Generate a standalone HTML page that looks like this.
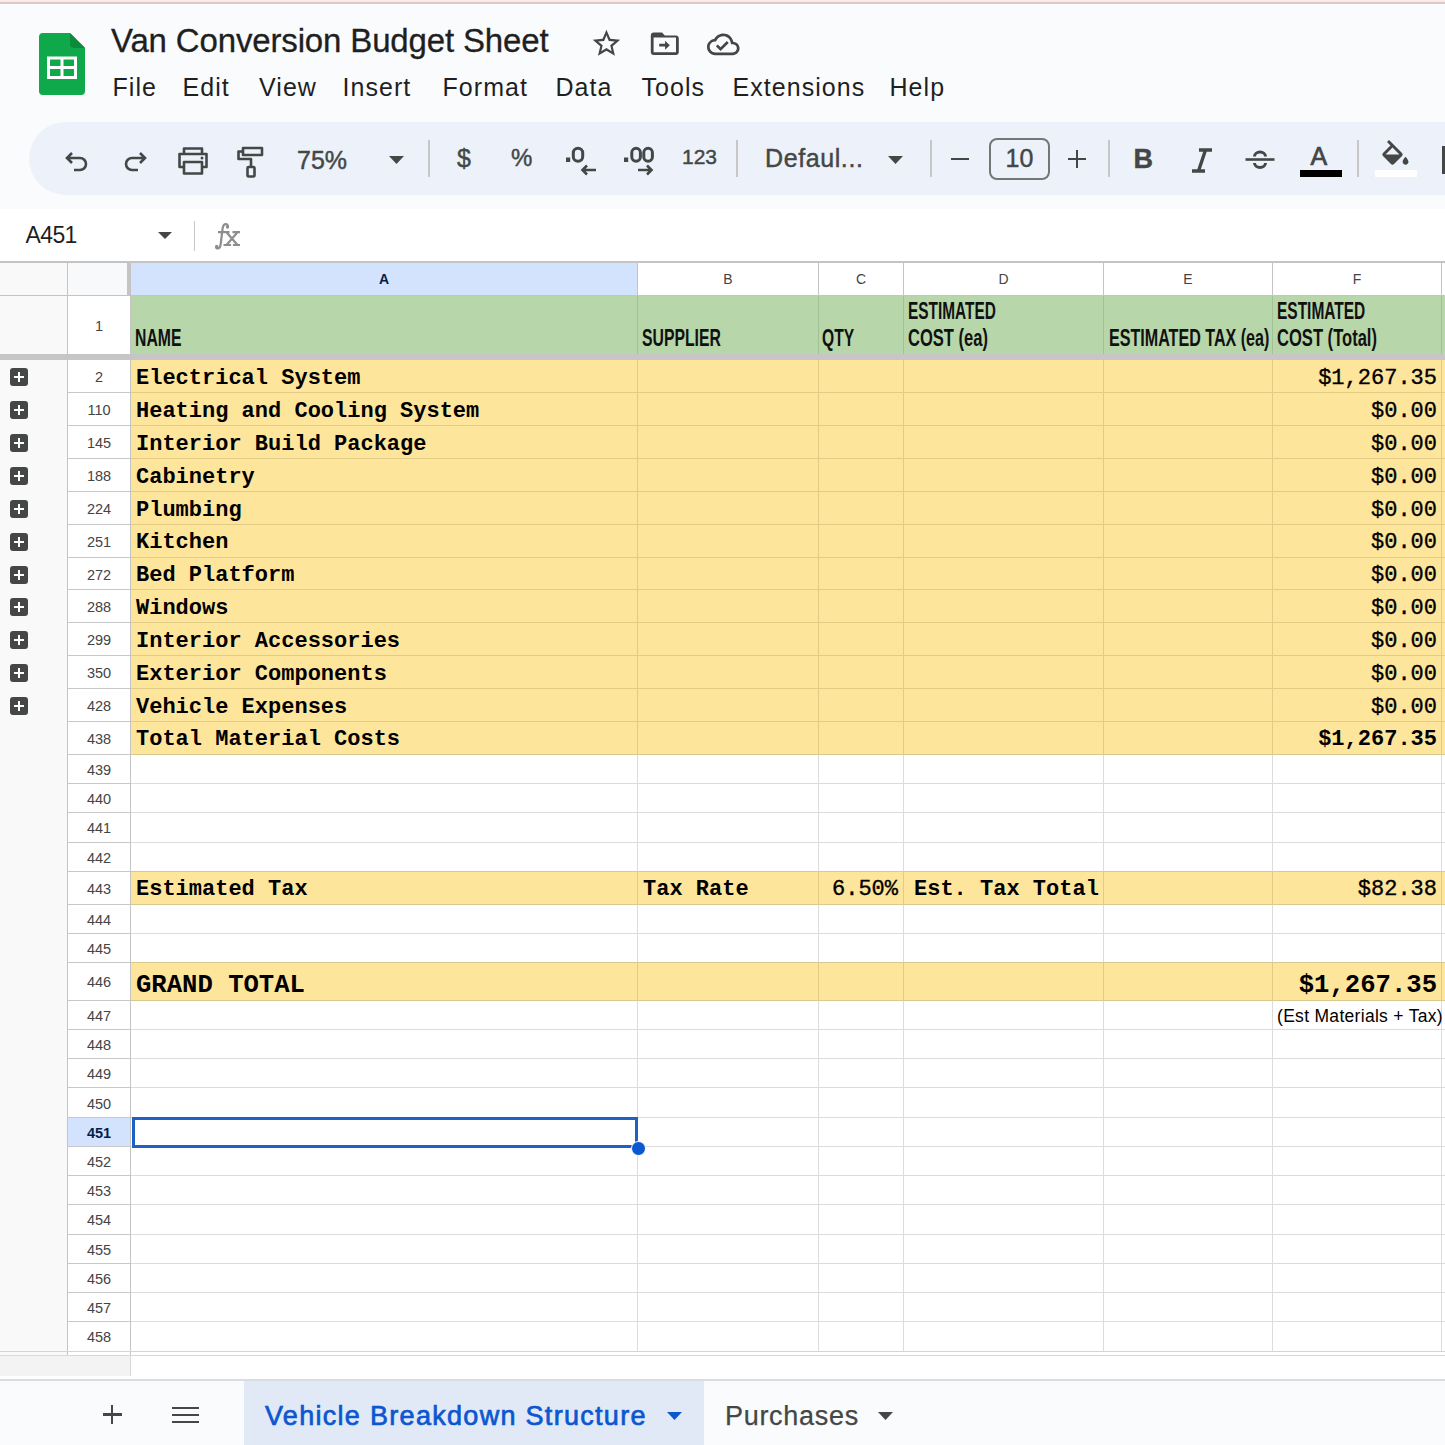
<!DOCTYPE html><html><head><meta charset="utf-8"><style>
*{margin:0;padding:0;box-sizing:border-box}
html,body{width:1445px;height:1445px;overflow:hidden;background:#f9fbfd;font-family:"Liberation Sans",sans-serif;color:#1f1f1f}
.a{position:absolute}
.reg{font-family:"Liberation Mono",monospace;font-size:22px;line-height:22px;color:#000;white-space:pre;-webkit-text-stroke:0.35px #000}
.mono{font-family:"Liberation Mono",monospace;font-weight:bold;color:#000;white-space:pre}
.hdr{font-family:"Liberation Sans",sans-serif;font-weight:bold;color:#111;white-space:nowrap;transform-origin:0 0}
.rn{font-size:14.5px;color:#444;text-align:center;width:62px;left:68px}
.cl{font-size:14px;color:#444;text-align:center}
.menu{font-size:25px;color:#1f1f1f;top:72.5px;letter-spacing:1.05px}
.ic{stroke:#444746;fill:none;stroke-width:2.6}
</style></head><body>
<div class="a" style="left:0;top:0;width:1445px;height:2.5px;background:#fde8e8"></div>
<div class="a" style="left:0;top:2px;width:1445px;height:1.5px;background:#d9caca"></div>
<div class="a" style="left:0;top:3.5px;width:1445px;height:1.5px;background:#fff"></div>
<svg class="a" style="left:39px;top:33px" width="46" height="62" viewBox="0 0 46 62">
<path d="M4 0H31L46 15V58a4 4 0 0 1-4 4H4a4 4 0 0 1-4-4V4a4 4 0 0 1 4-4z" fill="#0fa84a"/>
<path d="M31 0L46 15H35a4 4 0 0 1-4-4z" fill="#0a8a3a"/>
<rect x="8" y="23.5" width="30" height="22.5" fill="#fff"/>
<rect x="11" y="26.5" width="10.5" height="6.5" fill="#0fa84a"/>
<rect x="24.5" y="26.5" width="10.5" height="6.5" fill="#0fa84a"/>
<rect x="11" y="36" width="10.5" height="7" fill="#0fa84a"/>
<rect x="24.5" y="36" width="10.5" height="7" fill="#0fa84a"/>
</svg>
<div class="a" style="left:111px;top:22px;font-size:33px;line-height:38px;color:#1f1f1f;white-space:nowrap;letter-spacing:-0.15px;-webkit-text-stroke:0.3px #1f1f1f">Van Conversion Budget Sheet</div>
<svg class="a" style="left:589.7px;top:27.3px" width="32.9" height="32.9" viewBox="0 0 24 24"><path fill="#444746" d="M22 9.24l-7.19-.62L12 2 9.19 8.63 2 9.24l5.46 4.73L5.82 21 12 17.27 18.18 21l-1.63-7.03L22 9.24zM12 15.4l-3.76 2.27 1-4.28-3.32-2.88 4.38-.38L12 6.1l1.71 4.04 4.38.38-3.320 2.88 1 4.28L12 15.4z"/></svg>
<svg class="a" style="left:647.5px;top:27.4px" width="33.6" height="33.6" viewBox="0 0 24 24"><path fill="#444746" d="M20 6h-8l-2-2H4c-1.1 0-1.99.9-1.99 2L2 18c0 1.1.9 2 2 2h16c1.1 0 2-.9 2-2V8c0-1.1-.9-2-2-2zm0 12H4V7.5h16z"/><path fill="#444746" d="M8 12h4.2v-2.2L15.6 13l-3.4 3.2V14H8z"/></svg>
<svg class="a" style="left:707px;top:27.6px" width="32.6" height="32.6" viewBox="0 0 24 24"><path fill="#444746" d="M19.35 10.04C18.67 6.59 15.64 4 12 4 9.11 4 6.6 5.64 5.35 8.04 2.34 8.36 0 10.91 0 14c0 3.31 2.69 6 6 6h13c2.76 0 5-2.24 5-5 0-2.64-2.05-4.780-4.65-4.96zM19 18H6c-2.21 0-4-1.79-4-4 0-2.05 1.53-3.76 3.56-3.97l1.07-.11.5-.95C8.080 7.14 9.94 6 12 6c2.62 0 4.88 1.86 5.39 4.43l.3 1.5 1.53.11c1.56.1 2.78 1.41 2.78 2.96 0 1.65-1.35 3-3 3zm-9-3.82l-2.09-2.09L6.5 13.5 10 17l6.01-6.01-1.41-1.41z"/></svg>
<div class="a menu" style="left:112.5px">File</div>
<div class="a menu" style="left:182.5px">Edit</div>
<div class="a menu" style="left:259px">View</div>
<div class="a menu" style="left:342.5px">Insert</div>
<div class="a menu" style="left:442.5px">Format</div>
<div class="a menu" style="left:555.5px">Data</div>
<div class="a menu" style="left:641.5px">Tools</div>
<div class="a menu" style="left:732.5px">Extensions</div>
<div class="a menu" style="left:889.5px">Help</div>
<div class="a" style="left:29px;top:122px;width:1500px;height:73px;border-radius:37px;background:#edf2fa"></div>
<svg class="a" style="left:62px;top:146px" width="30" height="30" viewBox="0 0 30 30"><path class="ic" stroke-width="2.7" d="M10 7L5 12l5 5M5 12h13a6 6 0 0 1 0 12h-6"/></svg>
<svg class="a" style="left:120px;top:146px" width="30" height="30" viewBox="0 0 30 30"><path class="ic" stroke-width="2.7" d="M20 7l5 5-5 5M25 12H12a6 6 0 0 0 0 12h6"/></svg>
<svg class="a" style="left:177px;top:146px" width="32" height="30" viewBox="0 0 32 30"><path class="ic" stroke-width="2.7" stroke-linejoin="round" d="M7 7V2.5h18V7M7 21H2.5V8h27v13H25M7 16h18v11.5H7z"/><circle cx="25" cy="12" r="1.5" fill="#444746"/></svg>
<svg class="a" style="left:236px;top:145px" width="30" height="34" viewBox="0 0 30 34"><path class="ic" stroke-width="2.7" stroke-linejoin="round" d="M7 3h19v7H7zM7 6.5H2.5v7.5h12.5v8"/><rect x="11.5" y="22" width="7" height="9.5" rx="1" class="ic" stroke-width="2.7"/></svg>
<div class="a" style="left:297px;top:145px;font-size:25px;line-height:30px;color:#444746;-webkit-text-stroke:0.45px #444746">75%</div>
<svg class="a" style="left:389px;top:155.5px" width="15" height="8" viewBox="0 0 15 8"><path d="M0 0H15L7.5 8z" fill="#444746"/></svg>
<div class="a" style="left:427.5px;top:140px;width:2px;height:37px;background:#c7c7c7"></div>
<div class="a" style="left:457px;top:143px;font-size:25px;line-height:30px;color:#444746;-webkit-text-stroke:0.45px #444746">$</div>
<div class="a" style="left:511px;top:143px;font-size:24px;line-height:30px;color:#444746;-webkit-text-stroke:0.45px #444746">%</div>
<svg class="a" style="left:564px;top:145px" width="22" height="20" viewBox="0 0 22 20"><rect x="2" y="12.5" width="4.2" height="4.5" fill="#444746"/><rect x="9.3" y="3.3" width="9.4" height="13" rx="4.7" fill="none" stroke="#444746" stroke-width="3"/></svg>
<svg class="a" style="left:580px;top:164px" width="17" height="12" viewBox="0 0 17 12"><path class="ic" stroke-width="2.5" d="M16 6H3M7 1.5L2.5 6 7 10.5"/></svg>
<svg class="a" style="left:622px;top:145px" width="34" height="20" viewBox="0 0 34 20"><rect x="2" y="12.5" width="4.2" height="4.5" fill="#444746"/><rect x="9.8" y="3.3" width="8.6" height="13" rx="4.3" fill="none" stroke="#444746" stroke-width="3"/><rect x="21.8" y="3.3" width="8.6" height="13" rx="4.3" fill="none" stroke="#444746" stroke-width="3"/></svg>
<svg class="a" style="left:637px;top:164px" width="17" height="12" viewBox="0 0 17 12"><path class="ic" stroke-width="2.5" d="M1 6h13M10 1.5L14.5 6 10 10.5"/></svg>
<div class="a" style="left:682px;top:144px;font-size:21px;line-height:26px;color:#444746;-webkit-text-stroke:0.45px #444746">123</div>
<div class="a" style="left:736px;top:140px;width:2px;height:37px;background:#c7c7c7"></div>
<div class="a" style="left:765px;top:143px;font-size:25px;line-height:30px;color:#444746;-webkit-text-stroke:0.45px #444746;letter-spacing:0.6px">Defaul...</div>
<svg class="a" style="left:888px;top:155.5px" width="15" height="8" viewBox="0 0 15 8"><path d="M0 0H15L7.5 8z" fill="#444746"/></svg>
<div class="a" style="left:930px;top:140px;width:2px;height:37px;background:#c7c7c7"></div>
<div class="a" style="left:951px;top:157.5px;width:18px;height:2.6px;background:#444746"></div>
<div class="a" style="left:989px;top:138px;width:61px;height:42px;border:2px solid #747775;border-radius:8px"></div>
<div class="a" style="left:989px;top:143px;width:61px;text-align:center;font-size:25px;line-height:30px;color:#444746;-webkit-text-stroke:0.45px #444746">10</div>
<div class="a" style="left:1068px;top:157.5px;width:18px;height:2.6px;background:#444746"></div>
<div class="a" style="left:1075.7px;top:150px;width:2.6px;height:18px;background:#444746"></div>
<div class="a" style="left:1107.5px;top:140px;width:2px;height:37px;background:#c7c7c7"></div>
<div class="a" style="left:1133.5px;top:143.5px;font-size:27px;line-height:30px;font-weight:bold;color:#444746;-webkit-text-stroke:0.4px #444746">B</div>
<svg class="a" style="left:1190px;top:148px" width="24" height="26" viewBox="0 0 24 26"><path d="M9 2h13M2 23h13M15.5 2L8.5 23" stroke="#444746" stroke-width="3.4" fill="none"/></svg>
<svg class="a" style="left:1244px;top:148px" width="32" height="24" viewBox="0 0 32 24"><path d="M1.5 11.5h29" stroke="#444746" stroke-width="2.6"/><path d="M10.5 8.5a5.5 4.5 0 0 1 11 0M10.5 15a5.5 4.5 0 0 0 11 0" stroke="#444746" stroke-width="3" fill="none"/></svg>
<div class="a" style="left:1310.5px;top:140.5px;font-size:25px;line-height:30px;color:#444746;-webkit-text-stroke:0.7px #444746">A</div>
<div class="a" style="left:1300px;top:169.5px;width:42px;height:7.5px;background:#000"></div>
<div class="a" style="left:1357px;top:140px;width:2px;height:37px;background:#c7c7c7"></div>
<svg class="a" style="left:1377.7px;top:140.3px" width="34.8" height="34.8" viewBox="0 0 24 24"><path fill="#444746" d="M16.56 8.94L7.62 0 6.21 1.41l2.38 2.38-5.15 5.15c-.59.59-.59 1.54 0 2.12l5.5 5.5c.29.29.68.44 1.06.44s.77-.15 1.06-.44l5.5-5.5c.59-.58.59-1.53 0-2.12zM5.21 10L10 5.21 14.79 10H5.21zM19 11.5s-2 2.17-2 3.5c0 1.1.9 2 2 2s2-.9 2-2c0-1.33-2-3.5-2-3.5z"/></svg>
<div class="a" style="left:1375px;top:170px;width:42px;height:7px;background:#fff"></div>
<div class="a" style="left:1442px;top:146px;width:4px;height:28px;background:#444746"></div>
<div class="a" style="left:0;top:208.5px;width:1445px;height:53.5px;background:#fff"></div>
<div class="a" style="left:25.5px;top:221px;font-size:23px;line-height:28px;color:#1f1f1f;letter-spacing:-0.6px">A451</div>
<svg class="a" style="left:157.5px;top:232px" width="14" height="7" viewBox="0 0 14 7"><path d="M0 0H14L7.0 7z" fill="#444746"/></svg>
<div class="a" style="left:193.5px;top:221px;width:1.5px;height:30px;background:#c7c7c7"></div>
<svg class="a" style="left:214px;top:222px" width="28" height="28" viewBox="0 0 28 28"><g stroke="#8e8e8e" fill="none" stroke-width="2.2"><path d="M14 5.2C14 3.2 13.2 2.1 11.8 2.1 9.8 2.1 9 4 8.6 6.5L6.7 22C6.3 25 5.3 26.4 3.8 26.4 2.6 26.4 2 25.6 2 24.7"/><path d="M4 10.2H15.5M18.5 10.2H26M12.5 10.2L23.5 23M23.5 10.2L12.5 23M9.5 23H17M19 23H26"/></g><circle cx="13.5" cy="5" r="1.7" fill="#8e8e8e"/><circle cx="2.7" cy="24.5" r="1.7" fill="#8e8e8e"/></svg>
<div class="a" style="left:0px;top:262px;width:1445px;height:1118px;background:#fff"></div>
<div class="a" style="left:0px;top:262px;width:67px;height:1093px;background:#faf9f9"></div>
<div class="a" style="left:68px;top:263px;width:59px;height:32px;background:#f8f9fa"></div>
<div class="a" style="left:131px;top:263px;width:506px;height:32px;background:#d3e3fd"></div>
<div class="a cl" style="left:131px;top:271px;width:506px;line-height:16px;color:#041e49;font-weight:bold">A</div>
<div class="a" style="left:638px;top:263px;width:180px;height:32px;background:#fff"></div>
<div class="a cl" style="left:638px;top:271px;width:180px;line-height:16px;color:#444;font-weight:normal">B</div>
<div class="a" style="left:819px;top:263px;width:84px;height:32px;background:#fff"></div>
<div class="a cl" style="left:819px;top:271px;width:84px;line-height:16px;color:#444;font-weight:normal">C</div>
<div class="a" style="left:904px;top:263px;width:199px;height:32px;background:#fff"></div>
<div class="a cl" style="left:904px;top:271px;width:199px;line-height:16px;color:#444;font-weight:normal">D</div>
<div class="a" style="left:1104px;top:263px;width:168px;height:32px;background:#fff"></div>
<div class="a cl" style="left:1104px;top:271px;width:168px;line-height:16px;color:#444;font-weight:normal">E</div>
<div class="a" style="left:1273px;top:263px;width:168px;height:32px;background:#fff"></div>
<div class="a cl" style="left:1273px;top:271px;width:168px;line-height:16px;color:#444;font-weight:normal">F</div>
<div class="a" style="left:1442px;top:263px;width:3px;height:32px;background:#fff"></div>
<div class="a" style="left:68px;top:296px;width:62px;height:58px;background:#fff"></div>
<div class="a" style="left:131px;top:296px;width:1314px;height:58px;background:#b7d6a9"></div>
<div class="a rn" style="top:316.5px;line-height:18px;color:#444;font-weight:normal">1</div>
<div class="a" style="left:637px;top:296px;width:1px;height:58px;background:#a3c197"></div>
<div class="a" style="left:818px;top:296px;width:1px;height:58px;background:#a3c197"></div>
<div class="a" style="left:903px;top:296px;width:1px;height:58px;background:#a3c197"></div>
<div class="a" style="left:1103px;top:296px;width:1px;height:58px;background:#a3c197"></div>
<div class="a" style="left:1272px;top:296px;width:1px;height:58px;background:#a3c197"></div>
<div class="a" style="left:1441px;top:296px;width:1px;height:58px;background:#a3c197"></div>
<div class="a" style="left:68px;top:360px;width:62px;height:32px;background:#fff"></div>
<div class="a" style="left:131px;top:360px;width:1314px;height:32px;background:#fee59c"></div>
<div class="a rn" style="top:368.43px;line-height:18px;color:#444;font-weight:normal">2</div>
<div class="a" style="left:637px;top:360px;width:1px;height:32px;background:#e2cb84"></div>
<div class="a" style="left:818px;top:360px;width:1px;height:32px;background:#e2cb84"></div>
<div class="a" style="left:903px;top:360px;width:1px;height:32px;background:#e2cb84"></div>
<div class="a" style="left:1103px;top:360px;width:1px;height:32px;background:#e2cb84"></div>
<div class="a" style="left:1272px;top:360px;width:1px;height:32px;background:#e2cb84"></div>
<div class="a" style="left:1441px;top:360px;width:1px;height:32px;background:#e2cb84"></div>
<div class="a" style="left:131px;top:392px;width:1314px;height:1px;background:#e2cb84"></div>
<div class="a" style="left:68px;top:392px;width:63px;height:1px;background:#c8c8c8"></div>
<div class="a" style="left:68px;top:393px;width:62px;height:32px;background:#fff"></div>
<div class="a" style="left:131px;top:393px;width:1314px;height:32px;background:#fee59c"></div>
<div class="a rn" style="top:401.28px;line-height:18px;color:#444;font-weight:normal">110</div>
<div class="a" style="left:637px;top:393px;width:1px;height:32px;background:#e2cb84"></div>
<div class="a" style="left:818px;top:393px;width:1px;height:32px;background:#e2cb84"></div>
<div class="a" style="left:903px;top:393px;width:1px;height:32px;background:#e2cb84"></div>
<div class="a" style="left:1103px;top:393px;width:1px;height:32px;background:#e2cb84"></div>
<div class="a" style="left:1272px;top:393px;width:1px;height:32px;background:#e2cb84"></div>
<div class="a" style="left:1441px;top:393px;width:1px;height:32px;background:#e2cb84"></div>
<div class="a" style="left:131px;top:425px;width:1314px;height:1px;background:#e2cb84"></div>
<div class="a" style="left:68px;top:425px;width:63px;height:1px;background:#c8c8c8"></div>
<div class="a" style="left:68px;top:426px;width:62px;height:32px;background:#fff"></div>
<div class="a" style="left:131px;top:426px;width:1314px;height:32px;background:#fee59c"></div>
<div class="a rn" style="top:434.13px;line-height:18px;color:#444;font-weight:normal">145</div>
<div class="a" style="left:637px;top:426px;width:1px;height:32px;background:#e2cb84"></div>
<div class="a" style="left:818px;top:426px;width:1px;height:32px;background:#e2cb84"></div>
<div class="a" style="left:903px;top:426px;width:1px;height:32px;background:#e2cb84"></div>
<div class="a" style="left:1103px;top:426px;width:1px;height:32px;background:#e2cb84"></div>
<div class="a" style="left:1272px;top:426px;width:1px;height:32px;background:#e2cb84"></div>
<div class="a" style="left:1441px;top:426px;width:1px;height:32px;background:#e2cb84"></div>
<div class="a" style="left:131px;top:458px;width:1314px;height:1px;background:#e2cb84"></div>
<div class="a" style="left:68px;top:458px;width:63px;height:1px;background:#c8c8c8"></div>
<div class="a" style="left:68px;top:459px;width:62px;height:32px;background:#fff"></div>
<div class="a" style="left:131px;top:459px;width:1314px;height:32px;background:#fee59c"></div>
<div class="a rn" style="top:466.98px;line-height:18px;color:#444;font-weight:normal">188</div>
<div class="a" style="left:637px;top:459px;width:1px;height:32px;background:#e2cb84"></div>
<div class="a" style="left:818px;top:459px;width:1px;height:32px;background:#e2cb84"></div>
<div class="a" style="left:903px;top:459px;width:1px;height:32px;background:#e2cb84"></div>
<div class="a" style="left:1103px;top:459px;width:1px;height:32px;background:#e2cb84"></div>
<div class="a" style="left:1272px;top:459px;width:1px;height:32px;background:#e2cb84"></div>
<div class="a" style="left:1441px;top:459px;width:1px;height:32px;background:#e2cb84"></div>
<div class="a" style="left:131px;top:491px;width:1314px;height:1px;background:#e2cb84"></div>
<div class="a" style="left:68px;top:491px;width:63px;height:1px;background:#c8c8c8"></div>
<div class="a" style="left:68px;top:492px;width:62px;height:32px;background:#fff"></div>
<div class="a" style="left:131px;top:492px;width:1314px;height:32px;background:#fee59c"></div>
<div class="a rn" style="top:499.83px;line-height:18px;color:#444;font-weight:normal">224</div>
<div class="a" style="left:637px;top:492px;width:1px;height:32px;background:#e2cb84"></div>
<div class="a" style="left:818px;top:492px;width:1px;height:32px;background:#e2cb84"></div>
<div class="a" style="left:903px;top:492px;width:1px;height:32px;background:#e2cb84"></div>
<div class="a" style="left:1103px;top:492px;width:1px;height:32px;background:#e2cb84"></div>
<div class="a" style="left:1272px;top:492px;width:1px;height:32px;background:#e2cb84"></div>
<div class="a" style="left:1441px;top:492px;width:1px;height:32px;background:#e2cb84"></div>
<div class="a" style="left:131px;top:524px;width:1314px;height:1px;background:#e2cb84"></div>
<div class="a" style="left:68px;top:524px;width:63px;height:1px;background:#c8c8c8"></div>
<div class="a" style="left:68px;top:525px;width:62px;height:32px;background:#fff"></div>
<div class="a" style="left:131px;top:525px;width:1314px;height:32px;background:#fee59c"></div>
<div class="a rn" style="top:532.68px;line-height:18px;color:#444;font-weight:normal">251</div>
<div class="a" style="left:637px;top:525px;width:1px;height:32px;background:#e2cb84"></div>
<div class="a" style="left:818px;top:525px;width:1px;height:32px;background:#e2cb84"></div>
<div class="a" style="left:903px;top:525px;width:1px;height:32px;background:#e2cb84"></div>
<div class="a" style="left:1103px;top:525px;width:1px;height:32px;background:#e2cb84"></div>
<div class="a" style="left:1272px;top:525px;width:1px;height:32px;background:#e2cb84"></div>
<div class="a" style="left:1441px;top:525px;width:1px;height:32px;background:#e2cb84"></div>
<div class="a" style="left:131px;top:557px;width:1314px;height:1px;background:#e2cb84"></div>
<div class="a" style="left:68px;top:557px;width:63px;height:1px;background:#c8c8c8"></div>
<div class="a" style="left:68px;top:558px;width:62px;height:31px;background:#fff"></div>
<div class="a" style="left:131px;top:558px;width:1314px;height:31px;background:#fee59c"></div>
<div class="a rn" style="top:565.53px;line-height:18px;color:#444;font-weight:normal">272</div>
<div class="a" style="left:637px;top:558px;width:1px;height:31px;background:#e2cb84"></div>
<div class="a" style="left:818px;top:558px;width:1px;height:31px;background:#e2cb84"></div>
<div class="a" style="left:903px;top:558px;width:1px;height:31px;background:#e2cb84"></div>
<div class="a" style="left:1103px;top:558px;width:1px;height:31px;background:#e2cb84"></div>
<div class="a" style="left:1272px;top:558px;width:1px;height:31px;background:#e2cb84"></div>
<div class="a" style="left:1441px;top:558px;width:1px;height:31px;background:#e2cb84"></div>
<div class="a" style="left:131px;top:589px;width:1314px;height:1px;background:#e2cb84"></div>
<div class="a" style="left:68px;top:589px;width:63px;height:1px;background:#c8c8c8"></div>
<div class="a" style="left:68px;top:590px;width:62px;height:32px;background:#fff"></div>
<div class="a" style="left:131px;top:590px;width:1314px;height:32px;background:#fee59c"></div>
<div class="a rn" style="top:598.38px;line-height:18px;color:#444;font-weight:normal">288</div>
<div class="a" style="left:637px;top:590px;width:1px;height:32px;background:#e2cb84"></div>
<div class="a" style="left:818px;top:590px;width:1px;height:32px;background:#e2cb84"></div>
<div class="a" style="left:903px;top:590px;width:1px;height:32px;background:#e2cb84"></div>
<div class="a" style="left:1103px;top:590px;width:1px;height:32px;background:#e2cb84"></div>
<div class="a" style="left:1272px;top:590px;width:1px;height:32px;background:#e2cb84"></div>
<div class="a" style="left:1441px;top:590px;width:1px;height:32px;background:#e2cb84"></div>
<div class="a" style="left:131px;top:622px;width:1314px;height:1px;background:#e2cb84"></div>
<div class="a" style="left:68px;top:622px;width:63px;height:1px;background:#c8c8c8"></div>
<div class="a" style="left:68px;top:623px;width:62px;height:32px;background:#fff"></div>
<div class="a" style="left:131px;top:623px;width:1314px;height:32px;background:#fee59c"></div>
<div class="a rn" style="top:631.23px;line-height:18px;color:#444;font-weight:normal">299</div>
<div class="a" style="left:637px;top:623px;width:1px;height:32px;background:#e2cb84"></div>
<div class="a" style="left:818px;top:623px;width:1px;height:32px;background:#e2cb84"></div>
<div class="a" style="left:903px;top:623px;width:1px;height:32px;background:#e2cb84"></div>
<div class="a" style="left:1103px;top:623px;width:1px;height:32px;background:#e2cb84"></div>
<div class="a" style="left:1272px;top:623px;width:1px;height:32px;background:#e2cb84"></div>
<div class="a" style="left:1441px;top:623px;width:1px;height:32px;background:#e2cb84"></div>
<div class="a" style="left:131px;top:655px;width:1314px;height:1px;background:#e2cb84"></div>
<div class="a" style="left:68px;top:655px;width:63px;height:1px;background:#c8c8c8"></div>
<div class="a" style="left:68px;top:656px;width:62px;height:32px;background:#fff"></div>
<div class="a" style="left:131px;top:656px;width:1314px;height:32px;background:#fee59c"></div>
<div class="a rn" style="top:664.08px;line-height:18px;color:#444;font-weight:normal">350</div>
<div class="a" style="left:637px;top:656px;width:1px;height:32px;background:#e2cb84"></div>
<div class="a" style="left:818px;top:656px;width:1px;height:32px;background:#e2cb84"></div>
<div class="a" style="left:903px;top:656px;width:1px;height:32px;background:#e2cb84"></div>
<div class="a" style="left:1103px;top:656px;width:1px;height:32px;background:#e2cb84"></div>
<div class="a" style="left:1272px;top:656px;width:1px;height:32px;background:#e2cb84"></div>
<div class="a" style="left:1441px;top:656px;width:1px;height:32px;background:#e2cb84"></div>
<div class="a" style="left:131px;top:688px;width:1314px;height:1px;background:#e2cb84"></div>
<div class="a" style="left:68px;top:688px;width:63px;height:1px;background:#c8c8c8"></div>
<div class="a" style="left:68px;top:689px;width:62px;height:32px;background:#fff"></div>
<div class="a" style="left:131px;top:689px;width:1314px;height:32px;background:#fee59c"></div>
<div class="a rn" style="top:696.93px;line-height:18px;color:#444;font-weight:normal">428</div>
<div class="a" style="left:637px;top:689px;width:1px;height:32px;background:#e2cb84"></div>
<div class="a" style="left:818px;top:689px;width:1px;height:32px;background:#e2cb84"></div>
<div class="a" style="left:903px;top:689px;width:1px;height:32px;background:#e2cb84"></div>
<div class="a" style="left:1103px;top:689px;width:1px;height:32px;background:#e2cb84"></div>
<div class="a" style="left:1272px;top:689px;width:1px;height:32px;background:#e2cb84"></div>
<div class="a" style="left:1441px;top:689px;width:1px;height:32px;background:#e2cb84"></div>
<div class="a" style="left:131px;top:721px;width:1314px;height:1px;background:#e2cb84"></div>
<div class="a" style="left:68px;top:721px;width:63px;height:1px;background:#c8c8c8"></div>
<div class="a" style="left:68px;top:722px;width:62px;height:32px;background:#fff"></div>
<div class="a" style="left:131px;top:722px;width:1314px;height:32px;background:#fee59c"></div>
<div class="a rn" style="top:729.78px;line-height:18px;color:#444;font-weight:normal">438</div>
<div class="a" style="left:637px;top:722px;width:1px;height:32px;background:#e2cb84"></div>
<div class="a" style="left:818px;top:722px;width:1px;height:32px;background:#e2cb84"></div>
<div class="a" style="left:903px;top:722px;width:1px;height:32px;background:#e2cb84"></div>
<div class="a" style="left:1103px;top:722px;width:1px;height:32px;background:#e2cb84"></div>
<div class="a" style="left:1272px;top:722px;width:1px;height:32px;background:#e2cb84"></div>
<div class="a" style="left:1441px;top:722px;width:1px;height:32px;background:#e2cb84"></div>
<div class="a" style="left:131px;top:754px;width:1314px;height:1px;background:#d8c991"></div>
<div class="a" style="left:68px;top:754px;width:63px;height:1px;background:#c8c8c8"></div>
<div class="a" style="left:68px;top:755px;width:62px;height:28px;background:#fff"></div>
<div class="a rn" style="top:760.85px;line-height:18px;color:#444;font-weight:normal">439</div>
<div class="a" style="left:637px;top:755px;width:1px;height:28px;background:#dcdcdc"></div>
<div class="a" style="left:818px;top:755px;width:1px;height:28px;background:#dcdcdc"></div>
<div class="a" style="left:903px;top:755px;width:1px;height:28px;background:#dcdcdc"></div>
<div class="a" style="left:1103px;top:755px;width:1px;height:28px;background:#dcdcdc"></div>
<div class="a" style="left:1272px;top:755px;width:1px;height:28px;background:#dcdcdc"></div>
<div class="a" style="left:1441px;top:755px;width:1px;height:28px;background:#dcdcdc"></div>
<div class="a" style="left:131px;top:783px;width:1314px;height:1px;background:#dcdcdc"></div>
<div class="a" style="left:68px;top:783px;width:63px;height:1px;background:#c8c8c8"></div>
<div class="a" style="left:68px;top:784px;width:62px;height:28px;background:#fff"></div>
<div class="a rn" style="top:790.15px;line-height:18px;color:#444;font-weight:normal">440</div>
<div class="a" style="left:637px;top:784px;width:1px;height:28px;background:#dcdcdc"></div>
<div class="a" style="left:818px;top:784px;width:1px;height:28px;background:#dcdcdc"></div>
<div class="a" style="left:903px;top:784px;width:1px;height:28px;background:#dcdcdc"></div>
<div class="a" style="left:1103px;top:784px;width:1px;height:28px;background:#dcdcdc"></div>
<div class="a" style="left:1272px;top:784px;width:1px;height:28px;background:#dcdcdc"></div>
<div class="a" style="left:1441px;top:784px;width:1px;height:28px;background:#dcdcdc"></div>
<div class="a" style="left:131px;top:812px;width:1314px;height:1px;background:#dcdcdc"></div>
<div class="a" style="left:68px;top:812px;width:63px;height:1px;background:#c8c8c8"></div>
<div class="a" style="left:68px;top:813px;width:62px;height:29px;background:#fff"></div>
<div class="a rn" style="top:819.45px;line-height:18px;color:#444;font-weight:normal">441</div>
<div class="a" style="left:637px;top:813px;width:1px;height:29px;background:#dcdcdc"></div>
<div class="a" style="left:818px;top:813px;width:1px;height:29px;background:#dcdcdc"></div>
<div class="a" style="left:903px;top:813px;width:1px;height:29px;background:#dcdcdc"></div>
<div class="a" style="left:1103px;top:813px;width:1px;height:29px;background:#dcdcdc"></div>
<div class="a" style="left:1272px;top:813px;width:1px;height:29px;background:#dcdcdc"></div>
<div class="a" style="left:1441px;top:813px;width:1px;height:29px;background:#dcdcdc"></div>
<div class="a" style="left:131px;top:842px;width:1314px;height:1px;background:#dcdcdc"></div>
<div class="a" style="left:68px;top:842px;width:63px;height:1px;background:#c8c8c8"></div>
<div class="a" style="left:68px;top:843px;width:62px;height:28px;background:#fff"></div>
<div class="a rn" style="top:848.75px;line-height:18px;color:#444;font-weight:normal">442</div>
<div class="a" style="left:637px;top:843px;width:1px;height:28px;background:#dcdcdc"></div>
<div class="a" style="left:818px;top:843px;width:1px;height:28px;background:#dcdcdc"></div>
<div class="a" style="left:903px;top:843px;width:1px;height:28px;background:#dcdcdc"></div>
<div class="a" style="left:1103px;top:843px;width:1px;height:28px;background:#dcdcdc"></div>
<div class="a" style="left:1272px;top:843px;width:1px;height:28px;background:#dcdcdc"></div>
<div class="a" style="left:1441px;top:843px;width:1px;height:28px;background:#dcdcdc"></div>
<div class="a" style="left:131px;top:871px;width:1314px;height:1px;background:#d8c991"></div>
<div class="a" style="left:68px;top:871px;width:63px;height:1px;background:#c8c8c8"></div>
<div class="a" style="left:68px;top:872px;width:62px;height:32px;background:#fff"></div>
<div class="a" style="left:131px;top:872px;width:1314px;height:32px;background:#fee59c"></div>
<div class="a rn" style="top:879.7px;line-height:18px;color:#444;font-weight:normal">443</div>
<div class="a" style="left:637px;top:872px;width:1px;height:32px;background:#e2cb84"></div>
<div class="a" style="left:818px;top:872px;width:1px;height:32px;background:#e2cb84"></div>
<div class="a" style="left:903px;top:872px;width:1px;height:32px;background:#e2cb84"></div>
<div class="a" style="left:1103px;top:872px;width:1px;height:32px;background:#e2cb84"></div>
<div class="a" style="left:1272px;top:872px;width:1px;height:32px;background:#e2cb84"></div>
<div class="a" style="left:1441px;top:872px;width:1px;height:32px;background:#e2cb84"></div>
<div class="a" style="left:131px;top:904px;width:1314px;height:1px;background:#d8c991"></div>
<div class="a" style="left:68px;top:904px;width:63px;height:1px;background:#c8c8c8"></div>
<div class="a" style="left:68px;top:905px;width:62px;height:28px;background:#fff"></div>
<div class="a rn" style="top:910.58px;line-height:18px;color:#444;font-weight:normal">444</div>
<div class="a" style="left:637px;top:905px;width:1px;height:28px;background:#dcdcdc"></div>
<div class="a" style="left:818px;top:905px;width:1px;height:28px;background:#dcdcdc"></div>
<div class="a" style="left:903px;top:905px;width:1px;height:28px;background:#dcdcdc"></div>
<div class="a" style="left:1103px;top:905px;width:1px;height:28px;background:#dcdcdc"></div>
<div class="a" style="left:1272px;top:905px;width:1px;height:28px;background:#dcdcdc"></div>
<div class="a" style="left:1441px;top:905px;width:1px;height:28px;background:#dcdcdc"></div>
<div class="a" style="left:131px;top:933px;width:1314px;height:1px;background:#dcdcdc"></div>
<div class="a" style="left:68px;top:933px;width:63px;height:1px;background:#c8c8c8"></div>
<div class="a" style="left:68px;top:934px;width:62px;height:28px;background:#fff"></div>
<div class="a rn" style="top:939.72px;line-height:18px;color:#444;font-weight:normal">445</div>
<div class="a" style="left:637px;top:934px;width:1px;height:28px;background:#dcdcdc"></div>
<div class="a" style="left:818px;top:934px;width:1px;height:28px;background:#dcdcdc"></div>
<div class="a" style="left:903px;top:934px;width:1px;height:28px;background:#dcdcdc"></div>
<div class="a" style="left:1103px;top:934px;width:1px;height:28px;background:#dcdcdc"></div>
<div class="a" style="left:1272px;top:934px;width:1px;height:28px;background:#dcdcdc"></div>
<div class="a" style="left:1441px;top:934px;width:1px;height:28px;background:#dcdcdc"></div>
<div class="a" style="left:131px;top:962px;width:1314px;height:1px;background:#d8c991"></div>
<div class="a" style="left:68px;top:962px;width:63px;height:1px;background:#c8c8c8"></div>
<div class="a" style="left:68px;top:963px;width:62px;height:37px;background:#fff"></div>
<div class="a" style="left:131px;top:963px;width:1314px;height:37px;background:#fee59c"></div>
<div class="a rn" style="top:973.25px;line-height:18px;color:#444;font-weight:normal">446</div>
<div class="a" style="left:637px;top:963px;width:1px;height:37px;background:#e2cb84"></div>
<div class="a" style="left:818px;top:963px;width:1px;height:37px;background:#e2cb84"></div>
<div class="a" style="left:903px;top:963px;width:1px;height:37px;background:#e2cb84"></div>
<div class="a" style="left:1103px;top:963px;width:1px;height:37px;background:#e2cb84"></div>
<div class="a" style="left:1272px;top:963px;width:1px;height:37px;background:#e2cb84"></div>
<div class="a" style="left:1441px;top:963px;width:1px;height:37px;background:#e2cb84"></div>
<div class="a" style="left:131px;top:1000px;width:1314px;height:1px;background:#d8c991"></div>
<div class="a" style="left:68px;top:1000px;width:63px;height:1px;background:#c8c8c8"></div>
<div class="a" style="left:68px;top:1001px;width:62px;height:28px;background:#fff"></div>
<div class="a rn" style="top:1006.82px;line-height:18px;color:#444;font-weight:normal">447</div>
<div class="a" style="left:637px;top:1001px;width:1px;height:28px;background:#dcdcdc"></div>
<div class="a" style="left:818px;top:1001px;width:1px;height:28px;background:#dcdcdc"></div>
<div class="a" style="left:903px;top:1001px;width:1px;height:28px;background:#dcdcdc"></div>
<div class="a" style="left:1103px;top:1001px;width:1px;height:28px;background:#dcdcdc"></div>
<div class="a" style="left:1272px;top:1001px;width:1px;height:28px;background:#dcdcdc"></div>
<div class="a" style="left:1441px;top:1001px;width:1px;height:28px;background:#dcdcdc"></div>
<div class="a" style="left:131px;top:1029px;width:1314px;height:1px;background:#dcdcdc"></div>
<div class="a" style="left:68px;top:1029px;width:63px;height:1px;background:#c8c8c8"></div>
<div class="a" style="left:68px;top:1030px;width:62px;height:28px;background:#fff"></div>
<div class="a rn" style="top:1036.05px;line-height:18px;color:#444;font-weight:normal">448</div>
<div class="a" style="left:637px;top:1030px;width:1px;height:28px;background:#dcdcdc"></div>
<div class="a" style="left:818px;top:1030px;width:1px;height:28px;background:#dcdcdc"></div>
<div class="a" style="left:903px;top:1030px;width:1px;height:28px;background:#dcdcdc"></div>
<div class="a" style="left:1103px;top:1030px;width:1px;height:28px;background:#dcdcdc"></div>
<div class="a" style="left:1272px;top:1030px;width:1px;height:28px;background:#dcdcdc"></div>
<div class="a" style="left:1441px;top:1030px;width:1px;height:28px;background:#dcdcdc"></div>
<div class="a" style="left:131px;top:1058px;width:1314px;height:1px;background:#dcdcdc"></div>
<div class="a" style="left:68px;top:1058px;width:63px;height:1px;background:#c8c8c8"></div>
<div class="a" style="left:68px;top:1059px;width:62px;height:28px;background:#fff"></div>
<div class="a rn" style="top:1065.28px;line-height:18px;color:#444;font-weight:normal">449</div>
<div class="a" style="left:637px;top:1059px;width:1px;height:28px;background:#dcdcdc"></div>
<div class="a" style="left:818px;top:1059px;width:1px;height:28px;background:#dcdcdc"></div>
<div class="a" style="left:903px;top:1059px;width:1px;height:28px;background:#dcdcdc"></div>
<div class="a" style="left:1103px;top:1059px;width:1px;height:28px;background:#dcdcdc"></div>
<div class="a" style="left:1272px;top:1059px;width:1px;height:28px;background:#dcdcdc"></div>
<div class="a" style="left:1441px;top:1059px;width:1px;height:28px;background:#dcdcdc"></div>
<div class="a" style="left:131px;top:1087px;width:1314px;height:1px;background:#dcdcdc"></div>
<div class="a" style="left:68px;top:1087px;width:63px;height:1px;background:#c8c8c8"></div>
<div class="a" style="left:68px;top:1088px;width:62px;height:29px;background:#fff"></div>
<div class="a rn" style="top:1094.52px;line-height:18px;color:#444;font-weight:normal">450</div>
<div class="a" style="left:637px;top:1088px;width:1px;height:29px;background:#dcdcdc"></div>
<div class="a" style="left:818px;top:1088px;width:1px;height:29px;background:#dcdcdc"></div>
<div class="a" style="left:903px;top:1088px;width:1px;height:29px;background:#dcdcdc"></div>
<div class="a" style="left:1103px;top:1088px;width:1px;height:29px;background:#dcdcdc"></div>
<div class="a" style="left:1272px;top:1088px;width:1px;height:29px;background:#dcdcdc"></div>
<div class="a" style="left:1441px;top:1088px;width:1px;height:29px;background:#dcdcdc"></div>
<div class="a" style="left:131px;top:1117px;width:1314px;height:1px;background:#dcdcdc"></div>
<div class="a" style="left:68px;top:1117px;width:63px;height:1px;background:#c8c8c8"></div>
<div class="a" style="left:68px;top:1118px;width:62px;height:28px;background:#d3e3fd"></div>
<div class="a rn" style="top:1123.75px;line-height:18px;color:#041e49;font-weight:bold">451</div>
<div class="a" style="left:637px;top:1118px;width:1px;height:28px;background:#dcdcdc"></div>
<div class="a" style="left:818px;top:1118px;width:1px;height:28px;background:#dcdcdc"></div>
<div class="a" style="left:903px;top:1118px;width:1px;height:28px;background:#dcdcdc"></div>
<div class="a" style="left:1103px;top:1118px;width:1px;height:28px;background:#dcdcdc"></div>
<div class="a" style="left:1272px;top:1118px;width:1px;height:28px;background:#dcdcdc"></div>
<div class="a" style="left:1441px;top:1118px;width:1px;height:28px;background:#dcdcdc"></div>
<div class="a" style="left:131px;top:1146px;width:1314px;height:1px;background:#dcdcdc"></div>
<div class="a" style="left:68px;top:1146px;width:63px;height:1px;background:#c8c8c8"></div>
<div class="a" style="left:68px;top:1147px;width:62px;height:28px;background:#fff"></div>
<div class="a rn" style="top:1152.98px;line-height:18px;color:#444;font-weight:normal">452</div>
<div class="a" style="left:637px;top:1147px;width:1px;height:28px;background:#dcdcdc"></div>
<div class="a" style="left:818px;top:1147px;width:1px;height:28px;background:#dcdcdc"></div>
<div class="a" style="left:903px;top:1147px;width:1px;height:28px;background:#dcdcdc"></div>
<div class="a" style="left:1103px;top:1147px;width:1px;height:28px;background:#dcdcdc"></div>
<div class="a" style="left:1272px;top:1147px;width:1px;height:28px;background:#dcdcdc"></div>
<div class="a" style="left:1441px;top:1147px;width:1px;height:28px;background:#dcdcdc"></div>
<div class="a" style="left:131px;top:1175px;width:1314px;height:1px;background:#dcdcdc"></div>
<div class="a" style="left:68px;top:1175px;width:63px;height:1px;background:#c8c8c8"></div>
<div class="a" style="left:68px;top:1176px;width:62px;height:28px;background:#fff"></div>
<div class="a rn" style="top:1182.22px;line-height:18px;color:#444;font-weight:normal">453</div>
<div class="a" style="left:637px;top:1176px;width:1px;height:28px;background:#dcdcdc"></div>
<div class="a" style="left:818px;top:1176px;width:1px;height:28px;background:#dcdcdc"></div>
<div class="a" style="left:903px;top:1176px;width:1px;height:28px;background:#dcdcdc"></div>
<div class="a" style="left:1103px;top:1176px;width:1px;height:28px;background:#dcdcdc"></div>
<div class="a" style="left:1272px;top:1176px;width:1px;height:28px;background:#dcdcdc"></div>
<div class="a" style="left:1441px;top:1176px;width:1px;height:28px;background:#dcdcdc"></div>
<div class="a" style="left:131px;top:1204px;width:1314px;height:1px;background:#dcdcdc"></div>
<div class="a" style="left:68px;top:1204px;width:63px;height:1px;background:#c8c8c8"></div>
<div class="a" style="left:68px;top:1205px;width:62px;height:29px;background:#fff"></div>
<div class="a rn" style="top:1211.45px;line-height:18px;color:#444;font-weight:normal">454</div>
<div class="a" style="left:637px;top:1205px;width:1px;height:29px;background:#dcdcdc"></div>
<div class="a" style="left:818px;top:1205px;width:1px;height:29px;background:#dcdcdc"></div>
<div class="a" style="left:903px;top:1205px;width:1px;height:29px;background:#dcdcdc"></div>
<div class="a" style="left:1103px;top:1205px;width:1px;height:29px;background:#dcdcdc"></div>
<div class="a" style="left:1272px;top:1205px;width:1px;height:29px;background:#dcdcdc"></div>
<div class="a" style="left:1441px;top:1205px;width:1px;height:29px;background:#dcdcdc"></div>
<div class="a" style="left:131px;top:1234px;width:1314px;height:1px;background:#dcdcdc"></div>
<div class="a" style="left:68px;top:1234px;width:63px;height:1px;background:#c8c8c8"></div>
<div class="a" style="left:68px;top:1235px;width:62px;height:28px;background:#fff"></div>
<div class="a rn" style="top:1240.68px;line-height:18px;color:#444;font-weight:normal">455</div>
<div class="a" style="left:637px;top:1235px;width:1px;height:28px;background:#dcdcdc"></div>
<div class="a" style="left:818px;top:1235px;width:1px;height:28px;background:#dcdcdc"></div>
<div class="a" style="left:903px;top:1235px;width:1px;height:28px;background:#dcdcdc"></div>
<div class="a" style="left:1103px;top:1235px;width:1px;height:28px;background:#dcdcdc"></div>
<div class="a" style="left:1272px;top:1235px;width:1px;height:28px;background:#dcdcdc"></div>
<div class="a" style="left:1441px;top:1235px;width:1px;height:28px;background:#dcdcdc"></div>
<div class="a" style="left:131px;top:1263px;width:1314px;height:1px;background:#dcdcdc"></div>
<div class="a" style="left:68px;top:1263px;width:63px;height:1px;background:#c8c8c8"></div>
<div class="a" style="left:68px;top:1264px;width:62px;height:28px;background:#fff"></div>
<div class="a rn" style="top:1269.92px;line-height:18px;color:#444;font-weight:normal">456</div>
<div class="a" style="left:637px;top:1264px;width:1px;height:28px;background:#dcdcdc"></div>
<div class="a" style="left:818px;top:1264px;width:1px;height:28px;background:#dcdcdc"></div>
<div class="a" style="left:903px;top:1264px;width:1px;height:28px;background:#dcdcdc"></div>
<div class="a" style="left:1103px;top:1264px;width:1px;height:28px;background:#dcdcdc"></div>
<div class="a" style="left:1272px;top:1264px;width:1px;height:28px;background:#dcdcdc"></div>
<div class="a" style="left:1441px;top:1264px;width:1px;height:28px;background:#dcdcdc"></div>
<div class="a" style="left:131px;top:1292px;width:1314px;height:1px;background:#dcdcdc"></div>
<div class="a" style="left:68px;top:1292px;width:63px;height:1px;background:#c8c8c8"></div>
<div class="a" style="left:68px;top:1293px;width:62px;height:28px;background:#fff"></div>
<div class="a rn" style="top:1299.15px;line-height:18px;color:#444;font-weight:normal">457</div>
<div class="a" style="left:637px;top:1293px;width:1px;height:28px;background:#dcdcdc"></div>
<div class="a" style="left:818px;top:1293px;width:1px;height:28px;background:#dcdcdc"></div>
<div class="a" style="left:903px;top:1293px;width:1px;height:28px;background:#dcdcdc"></div>
<div class="a" style="left:1103px;top:1293px;width:1px;height:28px;background:#dcdcdc"></div>
<div class="a" style="left:1272px;top:1293px;width:1px;height:28px;background:#dcdcdc"></div>
<div class="a" style="left:1441px;top:1293px;width:1px;height:28px;background:#dcdcdc"></div>
<div class="a" style="left:131px;top:1321px;width:1314px;height:1px;background:#dcdcdc"></div>
<div class="a" style="left:68px;top:1321px;width:63px;height:1px;background:#c8c8c8"></div>
<div class="a" style="left:68px;top:1322px;width:62px;height:29px;background:#fff"></div>
<div class="a rn" style="top:1328.38px;line-height:18px;color:#444;font-weight:normal">458</div>
<div class="a" style="left:637px;top:1322px;width:1px;height:29px;background:#dcdcdc"></div>
<div class="a" style="left:818px;top:1322px;width:1px;height:29px;background:#dcdcdc"></div>
<div class="a" style="left:903px;top:1322px;width:1px;height:29px;background:#dcdcdc"></div>
<div class="a" style="left:1103px;top:1322px;width:1px;height:29px;background:#dcdcdc"></div>
<div class="a" style="left:1272px;top:1322px;width:1px;height:29px;background:#dcdcdc"></div>
<div class="a" style="left:1441px;top:1322px;width:1px;height:29px;background:#dcdcdc"></div>
<div class="a" style="left:131px;top:1351px;width:1314px;height:1px;background:#dcdcdc"></div>
<div class="a" style="left:68px;top:1351px;width:63px;height:1px;background:#c8c8c8"></div>
<div class="a" style="left:637px;top:262px;width:1px;height:33px;background:#c4c4c4"></div>
<div class="a" style="left:818px;top:262px;width:1px;height:33px;background:#c4c4c4"></div>
<div class="a" style="left:903px;top:262px;width:1px;height:33px;background:#c4c4c4"></div>
<div class="a" style="left:1103px;top:262px;width:1px;height:33px;background:#c4c4c4"></div>
<div class="a" style="left:1272px;top:262px;width:1px;height:33px;background:#c4c4c4"></div>
<div class="a" style="left:1441px;top:262px;width:1px;height:33px;background:#c4c4c4"></div>
<div class="a" style="left:0px;top:261px;width:1445px;height:2px;background:#c4c4c4"></div>
<div class="a" style="left:0px;top:295px;width:1445px;height:1px;background:#c4c4c4"></div>
<div class="a" style="left:0px;top:354px;width:1445px;height:6px;background:#c6c6c6"></div>
<div class="a" style="left:67px;top:262px;width:1px;height:1093px;background:#c4c4c4"></div>
<div class="a" style="left:130px;top:295px;width:1px;height:1060px;background:#c4c4c4"></div>
<div class="a" style="left:127px;top:262px;width:4px;height:33px;background:#c4c4c4"></div>
<div class="a" style="left:0px;top:1351px;width:1445px;height:1px;background:#d4d4d4"></div>
<div class="a" style="left:0px;top:1355px;width:1445px;height:1px;background:#d8d8d8"></div>
<div class="a" style="left:0px;top:1356px;width:130px;height:20px;background:#f3f3f3"></div>
<div class="a" style="left:130px;top:1356px;width:1px;height:20px;background:#d8d8d8"></div>
<div class="a" style="left:0px;top:1379px;width:1445px;height:2px;background:#d9dce0"></div>
<div class="a" style="left:10px;top:368px;width:18px;height:18px;border-radius:3px;background:#454746"></div>
<div class="a" style="left:14px;top:376px;width:10px;height:2px;background:#fff"></div>
<div class="a" style="left:18px;top:372px;width:2px;height:10px;background:#fff"></div>
<div class="a" style="left:10px;top:401px;width:18px;height:18px;border-radius:3px;background:#454746"></div>
<div class="a" style="left:14px;top:409px;width:10px;height:2px;background:#fff"></div>
<div class="a" style="left:18px;top:405px;width:2px;height:10px;background:#fff"></div>
<div class="a" style="left:10px;top:434px;width:18px;height:18px;border-radius:3px;background:#454746"></div>
<div class="a" style="left:14px;top:442px;width:10px;height:2px;background:#fff"></div>
<div class="a" style="left:18px;top:438px;width:2px;height:10px;background:#fff"></div>
<div class="a" style="left:10px;top:467px;width:18px;height:18px;border-radius:3px;background:#454746"></div>
<div class="a" style="left:14px;top:475px;width:10px;height:2px;background:#fff"></div>
<div class="a" style="left:18px;top:471px;width:2px;height:10px;background:#fff"></div>
<div class="a" style="left:10px;top:500px;width:18px;height:18px;border-radius:3px;background:#454746"></div>
<div class="a" style="left:14px;top:508px;width:10px;height:2px;background:#fff"></div>
<div class="a" style="left:18px;top:504px;width:2px;height:10px;background:#fff"></div>
<div class="a" style="left:10px;top:533px;width:18px;height:18px;border-radius:3px;background:#454746"></div>
<div class="a" style="left:14px;top:541px;width:10px;height:2px;background:#fff"></div>
<div class="a" style="left:18px;top:537px;width:2px;height:10px;background:#fff"></div>
<div class="a" style="left:10px;top:566px;width:18px;height:18px;border-radius:3px;background:#454746"></div>
<div class="a" style="left:14px;top:574px;width:10px;height:2px;background:#fff"></div>
<div class="a" style="left:18px;top:570px;width:2px;height:10px;background:#fff"></div>
<div class="a" style="left:10px;top:598px;width:18px;height:18px;border-radius:3px;background:#454746"></div>
<div class="a" style="left:14px;top:606px;width:10px;height:2px;background:#fff"></div>
<div class="a" style="left:18px;top:602px;width:2px;height:10px;background:#fff"></div>
<div class="a" style="left:10px;top:631px;width:18px;height:18px;border-radius:3px;background:#454746"></div>
<div class="a" style="left:14px;top:639px;width:10px;height:2px;background:#fff"></div>
<div class="a" style="left:18px;top:635px;width:2px;height:10px;background:#fff"></div>
<div class="a" style="left:10px;top:664px;width:18px;height:18px;border-radius:3px;background:#454746"></div>
<div class="a" style="left:14px;top:672px;width:10px;height:2px;background:#fff"></div>
<div class="a" style="left:18px;top:668px;width:2px;height:10px;background:#fff"></div>
<div class="a" style="left:10px;top:697px;width:18px;height:18px;border-radius:3px;background:#454746"></div>
<div class="a" style="left:14px;top:705px;width:10px;height:2px;background:#fff"></div>
<div class="a" style="left:18px;top:701px;width:2px;height:10px;background:#fff"></div>
<div class="a hdr" style="left:135px;top:327.08px;font-size:23.3px;line-height:23.3px;transform:scaleX(0.677)">NAME</div>
<div class="a hdr" style="left:642px;top:327.08px;font-size:23.3px;line-height:23.3px;transform:scaleX(0.677)">SUPPLIER</div>
<div class="a hdr" style="left:822px;top:327.08px;font-size:23.3px;line-height:23.3px;transform:scaleX(0.67)">QTY</div>
<div class="a hdr" style="left:908px;top:300.48px;font-size:23.3px;line-height:23.3px;transform:scaleX(0.661)">ESTIMATED</div>
<div class="a hdr" style="left:907.5px;top:327.08px;font-size:23.3px;line-height:23.3px;transform:scaleX(0.71)">COST (ea)</div>
<div class="a hdr" style="left:1108.5px;top:327.08px;font-size:23.3px;line-height:23.3px;transform:scaleX(0.691)">ESTIMATED TAX (ea)</div>
<div class="a hdr" style="left:1277px;top:300.48px;font-size:23.3px;line-height:23.3px;transform:scaleX(0.664)">ESTIMATED</div>
<div class="a hdr" style="left:1277px;top:327.08px;font-size:23.3px;line-height:23.3px;transform:scaleX(0.711)">COST (Total)</div>
<div class="a mono" style="left:136px;top:368.14px;font-size:22px;line-height:22px">Electrical System</div>
<div class="a reg" style="right:8px;top:368.14px">$1,267.35</div>
<div class="a mono" style="left:136px;top:400.99px;font-size:22px;line-height:22px">Heating and Cooling System</div>
<div class="a reg" style="right:8px;top:400.99px">$0.00</div>
<div class="a mono" style="left:136px;top:433.84px;font-size:22px;line-height:22px">Interior Build Package</div>
<div class="a reg" style="right:8px;top:433.84px">$0.00</div>
<div class="a mono" style="left:136px;top:466.69px;font-size:22px;line-height:22px">Cabinetry</div>
<div class="a reg" style="right:8px;top:466.69px">$0.00</div>
<div class="a mono" style="left:136px;top:499.54px;font-size:22px;line-height:22px">Plumbing</div>
<div class="a reg" style="right:8px;top:499.54px">$0.00</div>
<div class="a mono" style="left:136px;top:532.39px;font-size:22px;line-height:22px">Kitchen</div>
<div class="a reg" style="right:8px;top:532.39px">$0.00</div>
<div class="a mono" style="left:136px;top:565.24px;font-size:22px;line-height:22px">Bed Platform</div>
<div class="a reg" style="right:8px;top:565.24px">$0.00</div>
<div class="a mono" style="left:136px;top:598.09px;font-size:22px;line-height:22px">Windows</div>
<div class="a reg" style="right:8px;top:598.09px">$0.00</div>
<div class="a mono" style="left:136px;top:630.94px;font-size:22px;line-height:22px">Interior Accessories</div>
<div class="a reg" style="right:8px;top:630.94px">$0.00</div>
<div class="a mono" style="left:136px;top:663.79px;font-size:22px;line-height:22px">Exterior Components</div>
<div class="a reg" style="right:8px;top:663.79px">$0.00</div>
<div class="a mono" style="left:136px;top:696.64px;font-size:22px;line-height:22px">Vehicle Expenses</div>
<div class="a reg" style="right:8px;top:696.64px">$0.00</div>
<div class="a mono" style="left:136px;top:729.49px;font-size:22px;line-height:22px">Total Material Costs</div>
<div class="a mono" style="right:8px;top:729.49px;font-size:22px;line-height:22px">$1,267.35</div>
<div class="a mono" style="left:136px;top:878.84px;font-size:22px;line-height:22px">Estimated Tax</div>
<div class="a mono" style="left:643px;top:878.84px;font-size:22px;line-height:22px">Tax Rate</div>
<div class="a" style="right:547px;top:878.84px;font-family:'Liberation Mono',monospace;font-size:22px;line-height:22px;color:#000;white-space:pre;-webkit-text-stroke:0.35px #000">6.50%</div>
<div class="a mono" style="left:914px;top:878.84px;font-size:22px;line-height:22px">Est. Tax Total</div>
<div class="a" style="right:8px;top:878.84px;font-family:'Liberation Mono',monospace;font-size:22px;line-height:22px;color:#000;white-space:pre;-webkit-text-stroke:0.35px #000">$82.38</div>
<div class="a mono" style="left:136px;top:972.78px;font-size:25.6px;line-height:25.6px">GRAND TOTAL</div>
<div class="a mono" style="right:8px;top:972.78px;font-size:25.6px;line-height:25.6px">$1,267.35</div>
<div class="a" style="left:1277px;top:1006px;font-size:17.5px;line-height:20px;color:#000;white-space:nowrap;letter-spacing:0.3px">(Est Materials + Tax)</div>
<div class="a" style="left:131.5px;top:1117px;width:506.5px;height:30.5px;border:3px solid #1f5fc6"></div>
<div class="a" style="left:630.5px;top:1140.5px;width:15px;height:15px;border-radius:50%;background:#0b57d0;border:1.5px solid #fff"></div>
<div class="a" style="left:0;top:1381px;width:1445px;height:64px;background:#f9fbfd"></div>
<div class="a" style="left:102.5px;top:1413px;width:19px;height:2.6px;background:#444746"></div>
<div class="a" style="left:110.7px;top:1404.5px;width:2.6px;height:19.5px;background:#444746"></div>
<div class="a" style="left:172px;top:1406.5px;width:26.5px;height:2.6px;background:#444746"></div>
<div class="a" style="left:172px;top:1413.5px;width:26.5px;height:2.6px;background:#444746"></div>
<div class="a" style="left:172px;top:1420.5px;width:26.5px;height:2.6px;background:#444746"></div>
<div class="a" style="left:244px;top:1381px;width:459.5px;height:64px;background:#e1e9f7"></div>
<div class="a" style="left:265px;top:1400px;font-size:27px;line-height:32px;font-weight:normal;color:#0b57d0;-webkit-text-stroke:0.7px #0b57d0;white-space:nowrap;letter-spacing:1.3px">Vehicle Breakdown Structure</div>
<svg class="a" style="left:666.5px;top:1411.5px" width="15" height="8" viewBox="0 0 15 8"><path d="M0 0H15L7.5 8z" fill="#0b57d0"/></svg>
<div class="a" style="left:725px;top:1400px;font-size:27px;line-height:32px;color:#444746;-webkit-text-stroke:0.25px #444746;white-space:nowrap;letter-spacing:0.7px">Purchases</div>
<svg class="a" style="left:877.5px;top:1411.5px" width="15" height="8" viewBox="0 0 15 8"><path d="M0 0H15L7.5 8z" fill="#444746"/></svg>
</body></html>
